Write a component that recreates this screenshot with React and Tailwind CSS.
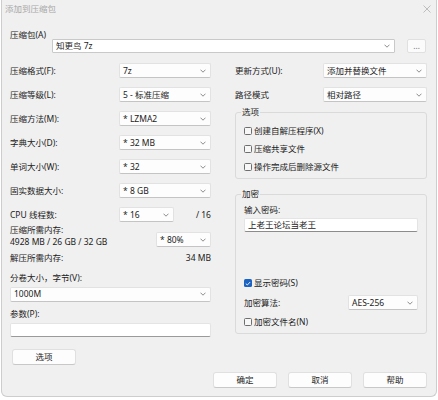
import React from "react";

const Chevron = () => (
  <svg width="6" height="4" viewBox="0 0 6 4" className="shrink-0">
    <path d="M0.5 0.7 L3 3.2 L5.5 0.7" fill="none" stroke="#707070" strokeWidth="0.8" />
  </svg>
);

function Select({ value, className = "" }) {
  return (
    <div
      className={`flex items-center justify-between h-[15px] bg-[#fdfdfd] border border-[#e2e2e2] border-b-[#c4c4c4] rounded-[2px] pl-[3px] pr-[4px] ${className}`}
    >
      <span className="whitespace-nowrap">{value}</span>
      <Chevron />
    </div>
  );
}

function Row({ label, value, selectClass }) {
  return (
    <div className="flex items-center justify-between h-[15px]">
      <span className="whitespace-nowrap">{label}</span>
      <Select value={value} className={selectClass} />
    </div>
  );
}

function Check({ label, checked }) {
  return (
    <div className="flex items-center h-[12px] gap-[2px]">
      {checked ? (
        <div className="w-[8px] h-[8px] rounded-[1.5px] bg-[#1a63c2] flex items-center justify-center">
          <svg width="6" height="5" viewBox="0 0 6 5">
            <path d="M0.8 2.6 L2.3 4 L5.2 1" fill="none" stroke="#fff" strokeWidth="0.9" />
          </svg>
        </div>
      ) : (
        <div className="w-[8px] h-[8px] rounded-[1.5px] border border-[#6e6e6e] bg-[#f7f7f7]" />
      )}
      <span className="whitespace-nowrap">{label}</span>
    </div>
  );
}

function Button({ children, className = "" }) {
  return (
    <div
      className={`flex items-center justify-center w-[64px] h-[16px] bg-[#fdfdfd] border border-[#e0e0e0] border-b-[#c8c8c8] rounded-[3px] ${className}`}
    >
      {children}
    </div>
  );
}

export default function App() {
  return (
    <div
      className="w-[438px] h-[400px] bg-white text-[#1b1b1b] text-[8.5px] leading-[10px]"
      style={{ fontFamily: '"Noto Sans", "Noto Sans CJK SC", sans-serif' }}
    >
      <div className="ml-[1px] w-[436px] h-[397px] bg-[#f0f0f0] border-l border-r border-b border-[#cdcdcd] rounded-b-[6px] flex flex-col">
        {/* title bar */}
        <div className="h-[17px] flex items-center justify-between pl-[3px] pr-[5px]">
          <span className="text-[#a8a8a8]">添加到压缩包</span>
          <svg width="8" height="8" viewBox="0 0 8 8">
            <path d="M0.5 0.5 L7.5 7.5 M7.5 0.5 L0.5 7.5" stroke="#b0b0b0" strokeWidth="0.8" />
          </svg>
        </div>

        <div className="pl-[8px] flex flex-col">
          {/* archive row */}
          <div className="mt-[13px] flex items-start">
            <span className="w-[42px] whitespace-nowrap">压缩包(A)</span>
            <div className="mt-[9px] w-[343px] h-[14px] flex items-center justify-between bg-white border border-[#c9c9c9] rounded-[1px] pl-[3px] pr-[4px]">
              <span>知更鸟 7z</span>
              <Chevron />
            </div>
            <div className="mt-[9px] ml-[12px] w-[19px] h-[14px] flex items-center justify-center bg-[#fbfbfb] border border-[#e0e0e0] rounded-[2px] text-[#777]">
              …
            </div>
          </div>

          {/* columns */}
          <div className="mt-[10px] flex gap-[24px] h-[302px]">
            {/* left */}
            <div className="w-[201px] flex flex-col">
              <div className="flex flex-col gap-[9px]">
                <Row label="压缩格式(F):" value="7z" selectClass="w-[92px]" />
                <Row label="压缩等级(L):" value="5 - 标准压缩" selectClass="w-[92px]" />
                <Row label="压缩方法(M):" value="* LZMA2" selectClass="w-[92px]" />
                <Row label="字典大小(D):" value="* 32 MB" selectClass="w-[92px]" />
                <Row label="单词大小(W):" value="* 32" selectClass="w-[92px]" />
                <Row label="固实数据大小:" value="* 8 GB" selectClass="w-[92px]" />
                <div className="flex items-center h-[15px]">
                  <span className="w-[109px] whitespace-nowrap">CPU 线程数:</span>
                  <Select value="* 16" className="w-[55px]" />
                  <span className="ml-auto">/ 16</span>
                </div>
              </div>

              <div className="mt-[2px] flex justify-between items-start">
                <div className="leading-[12px]">
                  <div>压缩所需内存:</div>
                  <div>4928 MB / 26 GB / 32 GB</div>
                </div>
                <Select value="* 80%" className="w-[55px] mt-[8px] h-[14px]" />
              </div>

              <div className="mt-[4px] flex justify-between leading-[12px]">
                <span>解压所需内存:</span>
                <span>34 MB</span>
              </div>

              <div className="mt-[8px] leading-[12px]">分卷大小，字节(V):</div>
              <Select value="1000M" className="mt-[3px] h-[14px] w-[201px]" />

              <div className="mt-[6px] leading-[12px]">参数(P):</div>
              <div className="mt-[3px] h-[15px] w-[201px] bg-white border border-[#e4e4e4] border-b-[#9a9a9a] rounded-[2px]" />

              <Button className="mt-[12px] ml-[2px]">选项</Button>
            </div>

            {/* right */}
            <div className="w-[192px] flex flex-col">
              <Row label="更新方式(U):" value="添加并替换文件" selectClass="w-[104px]" />
              <div className="mt-[9px]">
                <Row label="路径模式" value="相对路径" selectClass="w-[104px]" />
              </div>

              <fieldset className="mt-[5px] border border-[#dadada] rounded-[3px] pl-[5px] pb-[5px]">
                <legend className="px-[1px] leading-[10px]">选项</legend>
                <div className="pl-[3px] pt-[8px] flex flex-col gap-[6px]">
                  <Check label="创建自解压程序(X)" />
                  <Check label="压缩共享文件" />
                  <Check label="操作完成后删除源文件" />
                </div>
              </fieldset>

              <fieldset className="mt-[10px] border border-[#dadada] rounded-[3px] pl-[5px] pb-[5px]">
                <legend className="px-[1px] leading-[10px]">加密</legend>
                <div className="pl-[3px] flex flex-col">
                  <div className="mt-[5px] leading-[12px]">输入密码:</div>
                  <div className="mt-[2px] w-[174px] h-[14px] flex items-center bg-white border border-[#e4e4e4] border-b-[#8c8c8c] rounded-[2px] pl-[3px]">
                    上老王论坛当老王
                  </div>
                  <div className="mt-[45px]">
                    <Check label="显示密码(S)" checked />
                  </div>
                  <div className="mt-[6px] w-[174px] flex items-center justify-between">
                    <span>加密算法:</span>
                    <Select value="AES-256" className="w-[70px] h-[14px]" />
                  </div>
                  <div className="mt-[6px]">
                    <Check label="加密文件名(N)" />
                  </div>
                </div>
              </fieldset>
            </div>
          </div>

          {/* buttons */}
          <div className="mt-[7px] flex justify-end gap-[11px] pr-[9px]">
            <Button>确定</Button>
            <Button>取消</Button>
            <Button>帮助</Button>
          </div>
        </div>
      </div>
    </div>
  );
}
